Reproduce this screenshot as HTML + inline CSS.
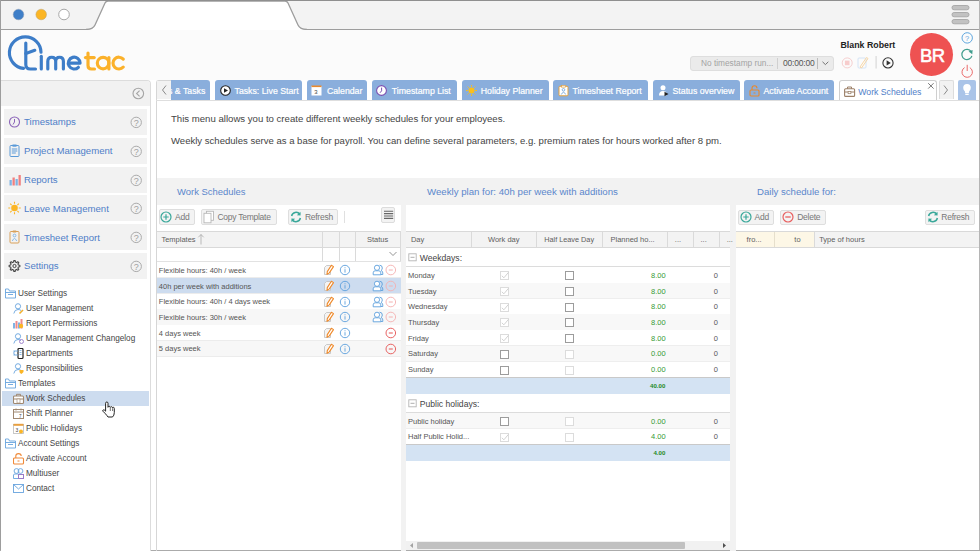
<!DOCTYPE html>
<html><head><meta charset="utf-8">
<style>
*{box-sizing:border-box;margin:0;padding:0}
html,body{width:980px;height:551px;overflow:hidden;background:#fff}
body{font-family:"Liberation Sans",sans-serif;position:relative;color:#444}
.a{position:absolute}
.t{position:absolute;white-space:nowrap;line-height:1}
</style></head><body>

<!-- ===== browser chrome ===== -->
<div class="a" style="left:0;top:0;width:980px;height:30px;background:#f3f3f3;border-bottom:1px solid #9d9d9d"></div>
<svg class="a" style="left:0;top:0" width="980" height="31">
  <path d="M88 31 L88 29.5 Q93 29.5 95 25 L105 3 Q106 1 108 1 L285 1 Q287 1 288 3 L298 25 Q300 29.5 305 29.5 L305 31 Z" fill="#fff"/>
  <path d="M86 29.5 Q93 29.5 95 25 L105 3 Q106 1 108 1 L285 1 Q287 1 288 3 L298 25 Q300 29.5 307 29.5" fill="none" stroke="#9d9d9d" stroke-width="1.3"/>
  <circle cx="18.5" cy="14.5" r="5.3" fill="#3f7fc8" stroke="#8a9bb0" stroke-width=".5"/>
  <circle cx="41.2" cy="14.5" r="5.3" fill="#fbb524" stroke="#b9a070" stroke-width=".5"/>
  <circle cx="64" cy="14.5" r="5.3" fill="#fff" stroke="#a8a8a8" stroke-width="1"/>
  <rect x="952" y="5.5" width="17" height="4.3" rx="2.1" fill="#c2c2c2" stroke="#a6a6a6" stroke-width=".9"/>
  <rect x="952" y="12.5" width="17" height="4.3" rx="2.1" fill="#c2c2c2" stroke="#a6a6a6" stroke-width=".9"/>
  <rect x="952" y="19.5" width="17" height="4.3" rx="2.1" fill="#c2c2c2" stroke="#a6a6a6" stroke-width=".9"/>
</svg>
<div class="a" style="left:0;top:0;width:980px;height:1px;background:#8f8f8f"></div>
<div class="a" style="left:0;top:0;width:1px;height:551px;background:#9d9d9d"></div>
<div class="a" style="left:979px;top:0;width:1px;height:551px;background:#b5b5b5"></div>
<div class="a" style="left:0;top:550px;width:980px;height:1px;background:#ababab"></div>

<div class="a" style="left:1px;top:30px;width:978px;height:50px;background:#fbfbfb"></div>
<!-- ===== logo ===== -->
<svg class="a" style="left:0;top:30px" width="140" height="50" viewBox="0 30 140 50">
 <g fill="none" stroke-width="3.15" stroke-linecap="round" stroke-linejoin="round">
  <g stroke="#3d7dc8">
   <path d="M23.5 68.4 A15.8 15.8 0 1 1 41 52.2"/>
   <path d="M41.3 56.3 L41.3 69"/>
   <path d="M25.8 43 L25.8 64.5 Q25.8 69 30.3 69 L35.5 69"/>
   <path d="M25.8 53.5 L34.8 50.3"/>
   <path d="M47.8 69 L47.8 61.5 Q47.8 57.2 51.7 57.2 Q55.7 57.2 55.7 61.5 L55.7 69 M55.7 61.5 Q55.7 57.2 59.6 57.2 Q63.4 57.2 63.4 61.5 L63.4 69"/>
   <path d="M68.30 63.10 H80.10 A5.9 5.9 0 1 0 78.37 67.27"/>
  </g>
  <g stroke="#fbb12a">
   <path d="M88 53 L88 65.5 Q88 69 91.5 69 L94.5 69"/>
   <path d="M85.5 57.6 L94.2 57.6"/>
   <path d="M108.9 57.5 L108.9 69"/><circle cx="103.1" cy="63.1" r="5.8"/>
   <path d="M123.28 59.15 A5.9 5.9 0 1 0 123.28 67.05"/>
  </g>
 </g>
</svg>

<!-- ===== user area ===== -->
<div class="t" style="left:840.5px;top:41.2px;font-size:8.8px;font-weight:bold;color:#222">Blank Robert</div>
<div class="a" style="left:690px;top:56px;width:144px;height:15px;background:#ebebeb;border:1px solid #dedede;border-radius:3px"></div>
<div class="t" style="left:701px;top:59px;font-size:8.3px;color:#a3a3a3">No timestamp run...</div>
<div class="a" style="left:777px;top:58px;width:1px;height:11px;background:#d0d0d0"></div>
<div class="t" style="left:783px;top:59.4px;font-size:8.5px;color:#555;letter-spacing:-0.2px">00:00:00</div>
<div class="a" style="left:817px;top:58px;width:1px;height:11px;background:#bdbdbd"></div>
<svg class="a" style="left:800px;top:40px" width="180" height="40">
  <path d="M22.5 21.8 L25.4 24.6 L28.3 21.8" fill="none" stroke="#666" stroke-width=".9"/>
  <circle cx="47.2" cy="22.9" r="5" fill="none" stroke="#f6cfcf" stroke-width="1"/>
  <rect x="44.9" y="20.6" width="4.6" height="4.6" fill="#f7cccc"/>
  <rect x="58" y="18" width="8" height="10" rx="1" fill="none" stroke="#cfe0f4" stroke-width=".9"/>
  <path d="M60 27 L66.5 17.5 L68 18.5 L61.5 28 Z" fill="none" stroke="#f7d39c" stroke-width=".9"/>
  <rect x="75.6" y="16" width="1" height="12.5" fill="#d2d2d2"/>
  <circle cx="88" cy="22.9" r="5.1" fill="none" stroke="#333" stroke-width="1.1"/>
  <path d="M86.6 20.3 L90.8 22.9 L86.6 25.5 Z" fill="#333"/>
</svg>
<div class="a" style="left:909.5px;top:32.5px;width:43px;height:43px;border-radius:50%;background:#ee5252"></div>
<div class="t" style="left:920px;top:47px;font-size:18.5px;color:#fff;letter-spacing:-0.7px;-webkit-text-stroke:0.55px #fff">BR</div>
<svg class="a" style="left:955px;top:28px" width="24" height="52">
  <circle cx="12.2" cy="9.9" r="5.2" fill="none" stroke="#5ea6de" stroke-width="1"/>
  <text x="12.2" y="12.7" font-size="7.5" font-family="Liberation Sans" fill="#5ea6de" text-anchor="middle">?</text>
  <path d="M16.9 27.8 A5.1 5.1 0 1 1 16.2 23.6" fill="none" stroke="#3f9d8d" stroke-width="1.2"/>
  <path d="M13.6 23.4 L17.6 21.9 L17.3 26.3 Z" fill="#3f9d8d"/>
  <path d="M9.6 39.6 A5.2 5.2 0 1 0 14.8 39.6" fill="none" stroke="#ea6a6a" stroke-width="1"/>
  <path d="M12.2 36.8 L12.2 43" fill="none" stroke="#ea6a6a" stroke-width="1"/>
</svg>

<!-- ===== sidebar ===== -->
<div class="a" style="left:1px;top:80px;width:150px;height:471px;border-top:1px solid #dcdcdc;border-right:1px solid #dcdcdc;border-top-right-radius:4px;background:#fff"></div>
<div class="a" style="left:1px;top:81px;width:149px;height:25px;background:#f1f1f1;border-top-right-radius:3px"></div>
<svg class="a" style="left:130px;top:85px" width="17" height="17"><circle cx="8.3" cy="8.5" r="5.3" fill="none" stroke="#a5a5a5" stroke-width="1.1"/><path d="M9.6 5.6 L6.6 8.5 L9.6 11.4" fill="none" stroke="#a5a5a5" stroke-width="1.1"/></svg>
<div class="a" style="left:4px;top:108.80px;width:143px;height:26px;background:#f2f2f2"></div>
<svg class="a" style="left:0;top:108.80px" width="150" height="26"><circle cx="14.5" cy="13" r="5" fill="none" stroke="#8a63b8" stroke-width="1.1"/><path d="M14.5 10 L14.5 13 L13 15.5" fill="none" stroke="#8a63b8" stroke-width="1"/><circle cx="136.2" cy="13.4" r="5.2" fill="none" stroke="#ababab" stroke-width="1"/><text x="136.3" y="16.6" font-size="9" font-family="Liberation Sans" fill="#a0a0a0" text-anchor="middle">?</text></svg>
<div class="t" style="left:24px;top:117.10px;font-size:9.6px;color:#4f7ec8">Timestamps</div>
<div class="a" style="left:4px;top:137.65px;width:143px;height:26px;background:#f2f2f2"></div>
<svg class="a" style="left:0;top:137.65px" width="150" height="26"><rect x="10" y="7.5" width="9" height="11" rx="1" fill="none" stroke="#5b9ad8" stroke-width="1"/><rect x="12.5" y="6.5" width="4" height="2.2" fill="#5b9ad8"/><path d="M11.8 11 h5.5 M11.8 13 h5.5 M11.8 15 h4" stroke="#5b9ad8" stroke-width="1"/><circle cx="136.2" cy="13.4" r="5.2" fill="none" stroke="#ababab" stroke-width="1"/><text x="136.3" y="16.6" font-size="9" font-family="Liberation Sans" fill="#a0a0a0" text-anchor="middle">?</text></svg>
<div class="t" style="left:24px;top:145.95px;font-size:9.6px;color:#4f7ec8">Project Management</div>
<div class="a" style="left:4px;top:166.50px;width:143px;height:26px;background:#f2f2f2"></div>
<svg class="a" style="left:0;top:166.50px" width="150" height="26"><rect x="9.5" y="13" width="2.3" height="5.5" fill="#7fb3e4"/><rect x="12.5" y="10.5" width="2.3" height="8" fill="#f08080"/><rect x="15.5" y="12" width="2.3" height="6.5" fill="#7fb3e4"/><rect x="18.5" y="8" width="2.3" height="10.5" fill="#f08080"/><circle cx="136.2" cy="13.4" r="5.2" fill="none" stroke="#ababab" stroke-width="1"/><text x="136.3" y="16.6" font-size="9" font-family="Liberation Sans" fill="#a0a0a0" text-anchor="middle">?</text></svg>
<div class="t" style="left:24px;top:174.80px;font-size:9.6px;color:#4f7ec8">Reports</div>
<div class="a" style="left:4px;top:195.35px;width:143px;height:26px;background:#f2f2f2"></div>
<svg class="a" style="left:0;top:195.35px" width="150" height="26"><circle cx="14.5" cy="13" r="3.3" fill="#fbb524"/><path d="M14.5 6.8 v2 M14.5 17.2 v2 M8.3 13 h2 M18.7 13 h2 M10.2 8.7 l1.4 1.4 M17.4 15.9 l1.4 1.4 M10.2 17.3 l1.4 -1.4 M17.4 10.1 l1.4 -1.4" stroke="#fbb524" stroke-width="1.1"/><circle cx="136.2" cy="13.4" r="5.2" fill="none" stroke="#ababab" stroke-width="1"/><text x="136.3" y="16.6" font-size="9" font-family="Liberation Sans" fill="#a0a0a0" text-anchor="middle">?</text></svg>
<div class="t" style="left:24px;top:203.65px;font-size:9.6px;color:#4f7ec8">Leave Management</div>
<div class="a" style="left:4px;top:224.20px;width:143px;height:26px;background:#f2f2f2"></div>
<svg class="a" style="left:0;top:224.20px" width="150" height="26"><rect x="10" y="7.5" width="9" height="11.5" rx="1" fill="none" stroke="#d9a15a" stroke-width="1"/><circle cx="14.5" cy="11.5" r="1.4" fill="none" stroke="#7fb3e4" stroke-width=".9"/><path d="M12.3 17 Q14.5 12 16.7 17" fill="none" stroke="#7fb3e4" stroke-width=".9"/><rect x="12.8" y="6.5" width="3.4" height="2" fill="#d9a15a"/><circle cx="136.2" cy="13.4" r="5.2" fill="none" stroke="#ababab" stroke-width="1"/><text x="136.3" y="16.6" font-size="9" font-family="Liberation Sans" fill="#a0a0a0" text-anchor="middle">?</text></svg>
<div class="t" style="left:24px;top:232.50px;font-size:9.6px;color:#4f7ec8">Timesheet Report</div>
<div class="a" style="left:4px;top:253.05px;width:143px;height:26px;background:#f2f2f2"></div>
<svg class="a" style="left:0;top:253.05px" width="150" height="26"><path d="M18.39 12.07 L19.85 12.28 L19.85 13.72 L18.39 13.93 L17.91 15.09 L18.79 16.28 L17.78 17.29 L16.59 16.41 L15.43 16.89 L15.22 18.35 L13.78 18.35 L13.57 16.89 L12.41 16.41 L11.22 17.29 L10.21 16.28 L11.09 15.09 L10.61 13.93 L9.15 13.72 L9.15 12.28 L10.61 12.07 L11.09 10.91 L10.21 9.72 L11.22 8.71 L12.41 9.59 L13.57 9.11 L13.78 7.65 L15.22 7.65 L15.43 9.11 L16.59 9.59 L17.78 8.71 L18.79 9.72 L17.91 10.91 Z" fill="none" stroke="#444" stroke-width="1.1" stroke-linejoin="round"/><circle cx="14.5" cy="13" r="1.6" fill="none" stroke="#444" stroke-width="1"/><circle cx="136.2" cy="13.4" r="5.2" fill="none" stroke="#ababab" stroke-width="1"/><text x="136.3" y="16.6" font-size="9" font-family="Liberation Sans" fill="#a0a0a0" text-anchor="middle">?</text></svg>
<div class="t" style="left:24px;top:261.35px;font-size:9.6px;color:#4f7ec8">Settings</div>
<div class="a" style="left:2px;top:391px;width:147px;height:15px;background:#cddcef"></div>
<svg class="a" style="left:5px;top:287.5px" width="12" height="12"><path d="M0.5 2 L0.5 10 L10.5 10 L10.5 3 L4.5 3 L3.5 1 L0.5 1 Z" fill="none" stroke="#68a4de" stroke-width=".9"/><path d="M0.5 4.5 H10.5 M3 6.5 H8" stroke="#68a4de" stroke-width=".9"/></svg>
<div class="t" style="left:18px;top:290.4px;font-size:8.2px;color:#454545">User Settings</div>
<svg class="a" style="left:12.5px;top:302.5px" width="12" height="12"><circle cx="5" cy="3.3" r="2.6" fill="none" stroke="#68a4de" stroke-width=".9"/><path d="M0.8 10.5 Q1.5 6.5 5 6.5 Q7 6.5 8 7.5" fill="none" stroke="#68a4de" stroke-width=".9"/><path d="M6.5 10.5 L10 7" stroke="#f0b030" stroke-width="1.6"/></svg>
<div class="t" style="left:26px;top:305.4px;font-size:8.2px;color:#454545">User Management</div>
<svg class="a" style="left:12.5px;top:317.5px" width="12" height="12"><rect x="0" y="5" width="2" height="5.5" fill="#7fb3e4"/><rect x="2.5" y="3" width="2" height="7.5" fill="#f08a8a"/><rect x="5" y="4.5" width="2" height="6" fill="#7fb3e4"/><rect x="7.5" y="1" width="2" height="9.5" fill="#f08a8a"/><circle cx="8" cy="8" r="2.2" fill="#fbb524"/></svg>
<div class="t" style="left:26px;top:320.4px;font-size:8.2px;color:#454545">Report Permissions</div>
<svg class="a" style="left:12.5px;top:332.5px" width="12" height="12"><circle cx="5" cy="3.3" r="2.6" fill="none" stroke="#68a4de" stroke-width=".9"/><path d="M0.8 10.5 Q1.5 6.5 5 6.5 Q7 6.5 8 7.5" fill="none" stroke="#68a4de" stroke-width=".9"/><circle cx="8.5" cy="8.5" r="2" fill="none" stroke="#9a7cc8" stroke-width=".9"/></svg>
<div class="t" style="left:26px;top:335.4px;font-size:8.2px;color:#454545">User Management Changelog</div>
<svg class="a" style="left:12.5px;top:347.5px" width="12" height="12"><rect x="5" y="0.5" width="5" height="10" rx="1" fill="#fff" stroke="#222" stroke-width="1.2"/><path d="M6.5 2.5 h2 M6.5 4.5 h2 M6.5 6.5 h2" stroke="#7fb3e4" stroke-width=".9"/><path d="M0.5 3 H5 M0.5 7 H5 M1.5 3 Q0 5 1.5 7" fill="none" stroke="#68a4de" stroke-width=".9"/></svg>
<div class="t" style="left:26px;top:350.4px;font-size:8.2px;color:#454545">Departments</div>
<svg class="a" style="left:12.5px;top:362.5px" width="12" height="12"><circle cx="5" cy="3.3" r="2.6" fill="none" stroke="#68a4de" stroke-width=".9"/><path d="M0.8 10.5 Q1.5 6.5 5 6.5 Q7 6.5 8 7.5" fill="none" stroke="#68a4de" stroke-width=".9"/><path d="M6.5 7 L10.5 7 L10.5 9 Q8.5 11 8.5 11 Q6.5 10 6.5 9 Z" fill="#fbb524"/></svg>
<div class="t" style="left:26px;top:365.4px;font-size:8.2px;color:#454545">Responsibilities</div>
<svg class="a" style="left:5px;top:377.5px" width="12" height="12"><path d="M0.5 2 L0.5 10 L10.5 10 L10.5 3 L4.5 3 L3.5 1 L0.5 1 Z" fill="none" stroke="#68a4de" stroke-width=".9"/><path d="M0.5 4.5 H10.5 M3 6.5 H8" stroke="#68a4de" stroke-width=".9"/></svg>
<div class="t" style="left:18px;top:380.4px;font-size:8.2px;color:#454545">Templates</div>
<svg class="a" style="left:12.5px;top:392.5px" width="12" height="12"><rect x="0.5" y="3" width="10" height="7.5" rx="1" fill="#fff" stroke="#a08870" stroke-width="1.1"/><path d="M3.5 3 V1.3 H7.5 V3 M0.5 6 H10.5" fill="none" stroke="#a08870" stroke-width="1"/><rect x="4" y="6" width="3" height="4" fill="#fff" stroke="#a08870" stroke-width=".6"/></svg>
<div class="t" style="left:26px;top:395.4px;font-size:8.2px;color:#454545">Work Schedules</div>
<svg class="a" style="left:12.5px;top:407.5px" width="12" height="12"><rect x="0.5" y="1.5" width="10" height="9" fill="#fff" stroke="#a08870" stroke-width="1"/><path d="M0.5 4 H10.5 M3 0.5 V2.5 M8 0.5 V2.5" stroke="#a08870" stroke-width="1"/><text x="6" y="9.5" font-size="4.5" font-family="Liberation Sans" fill="#444">7</text></svg>
<div class="t" style="left:26px;top:410.4px;font-size:8.2px;color:#454545">Shift Planner</div>
<svg class="a" style="left:12.5px;top:422.5px" width="12" height="12"><rect x="0.5" y="1.5" width="10" height="9" fill="#fff" stroke="#bbb" stroke-width=".8"/><rect x="0.5" y="0.8" width="10" height="2" fill="#e8a040"/><text x="2.5" y="9" font-size="5" font-family="Liberation Sans" fill="#444">3</text><circle cx="8" cy="8.5" r="2" fill="#fbb524"/></svg>
<div class="t" style="left:26px;top:425.4px;font-size:8.2px;color:#454545">Public Holidays</div>
<svg class="a" style="left:5px;top:437.5px" width="12" height="12"><path d="M0.5 2 L0.5 10 L10.5 10 L10.5 3 L4.5 3 L3.5 1 L0.5 1 Z" fill="none" stroke="#68a4de" stroke-width=".9"/><path d="M0.5 4.5 H10.5 M3 6.5 H8" stroke="#68a4de" stroke-width=".9"/></svg>
<div class="t" style="left:18px;top:440.4px;font-size:8.2px;color:#454545">Account Settings</div>
<svg class="a" style="left:12.5px;top:452.5px" width="12" height="12"><rect x="0.5" y="5" width="10" height="6" rx="1" fill="none" stroke="#f08a3a" stroke-width="1.1"/><path d="M2.8 5 V3 Q2.8 0.6 5.5 0.6 Q8.2 0.6 8.2 3" fill="none" stroke="#f08a3a" stroke-width="1.1"/><path d="M4.5 8 h2" stroke="#f08a3a" stroke-width="1"/></svg>
<div class="t" style="left:26px;top:455.4px;font-size:8.2px;color:#454545">Activate Account</div>
<svg class="a" style="left:12.5px;top:467.5px" width="12" height="12"><circle cx="3.5" cy="3" r="2.4" fill="none" stroke="#68a4de" stroke-width=".9"/><circle cx="7.5" cy="3" r="2.4" fill="none" stroke="#68a4de" stroke-width=".9"/><path d="M0.5 10.5 V7 Q0.5 6 2 6 H5.5 V10.5 Z" fill="none" stroke="#68a4de" stroke-width=".9"/><rect x="5.5" y="6.5" width="5" height="4" fill="none" stroke="#9a7cc8" stroke-width="1"/></svg>
<div class="t" style="left:26px;top:470.4px;font-size:8.2px;color:#454545">Multiuser</div>
<svg class="a" style="left:12.5px;top:482.5px" width="12" height="12"><rect x="0.5" y="1.5" width="10" height="8" fill="none" stroke="#68a4de" stroke-width=".9"/><path d="M0.5 1.5 L5.5 6 L10.5 1.5" fill="none" stroke="#68a4de" stroke-width=".9"/></svg>
<div class="t" style="left:26px;top:485.4px;font-size:8.2px;color:#454545">Contact</div>
<svg class="a" style="left:101px;top:401px" width="15" height="18"><path d="M4.6 10.2 L4.6 2.3 Q4.6 1 5.8 1 Q7 1 7 2.3 L7 6.3 Q7.2 5.3 8.2 5.3 Q9.2 5.3 9.3 6.4 Q9.6 5.7 10.4 5.7 Q11.4 5.7 11.6 6.8 Q11.9 6.3 12.5 6.3 Q13.3 6.3 13.3 7.6 L13.3 11.5 Q13.3 14.5 11.5 16 L7 16 Q6 14.5 4 12.3 L2 10.3 Q1.3 9.4 2.2 8.9 Q3.2 8.5 4.6 10.2 Z" fill="#fff" stroke="#222" stroke-width="1"/><path d="M9.3 6.8 V10 M11.6 7.2 V10" stroke="#333" stroke-width=".7"/></svg>

<!-- ===== content ===== -->
<div class="a" style="left:156px;top:80px;width:16px;height:471px;border-left:1px solid #d6d6d6;border-top:1px solid #d6d6d6;border-top-left-radius:3px"></div>
<div class="a" style="left:156px;top:99.5px;width:823px;height:1px;background:#dedede"></div>
<div class="a" style="left:157px;top:81px;width:14px;height:18px;background:#f2f2f2"></div>
<svg class="a" style="left:157px;top:81px" width="14" height="18"><path d="M9 4.5 L5.5 9 L9 13.5" fill="none" stroke="#8a8a8a" stroke-width="1"/></svg>
<div class="a" style="left:171px;top:80px;width:39.4px;height:19.5px;background:#8aaedc;border-radius:0 3px 0 0;overflow:hidden"><div class="t" style="left:-3px;top:7.2px;font-size:8.75px;color:#fff;-webkit-text-stroke:0.2px #fff">s &amp; Tasks</div></div>

<div class="a" style="left:215px;top:80px;width:87.4px;height:19.5px;background:#8aaedc;border-radius:3px 3px 0 0"></div>
<svg class="a" style="left:219.5px;top:85.4px" width="11" height="12"><circle cx="5.5" cy="5.5" r="4.8" fill="#fff" stroke="#222" stroke-width="1.1"/><path d="M4 3.2 L8 5.5 L4 7.8 Z" fill="#222"/></svg>
<div class="t" style="left:234.5px;top:87.2px;font-size:8.75px;color:#fff;-webkit-text-stroke:0.2px #fff">Tasks: Live Start</div>
<div class="a" style="left:306.8px;top:80px;width:60.2px;height:19.5px;background:#8aaedc;border-radius:3px 3px 0 0"></div>
<svg class="a" style="left:311.3px;top:85.4px" width="11" height="12"><rect x="0.5" y="1" width="10" height="9.5" fill="#fff"/><rect x="0.5" y="0.5" width="10" height="1.6" fill="#e8892e"/><text x="3.3" y="9.2" font-size="6" font-family="Liberation Sans" fill="#444">3</text></svg>
<div class="t" style="left:326.9px;top:87.2px;font-size:8.75px;color:#fff;-webkit-text-stroke:0.2px #fff">Calendar</div>
<div class="a" style="left:371.6px;top:80px;width:85.4px;height:19.5px;background:#8aaedc;border-radius:3px 3px 0 0"></div>
<svg class="a" style="left:376.1px;top:85.4px" width="11" height="12"><circle cx="5.5" cy="5.5" r="4.9" fill="#fff" stroke="#7a4fb0" stroke-width="1.1"/><path d="M5.6 2.6 L5.6 5.8 L4 7.8" fill="none" stroke="#7a4fb0" stroke-width="1"/></svg>
<div class="t" style="left:391.8px;top:87.2px;font-size:8.75px;color:#fff;-webkit-text-stroke:0.2px #fff">Timestamp List</div>
<div class="a" style="left:461.5px;top:80px;width:87.2px;height:19.5px;background:#8aaedc;border-radius:3px 3px 0 0"></div>
<svg class="a" style="left:466.0px;top:85.4px" width="11" height="12"><circle cx="5.5" cy="5.5" r="3" fill="#fbbf1a"/><path d="M5.5 0 v1.6 M5.5 9.4 v1.6 M0 5.5 h1.6 M9.4 5.5 h1.6 M1.6 1.6 l1.1 1.1 M8.3 8.3 l1.1 1.1 M1.6 9.4 l1.1 -1.1 M8.3 2.7 l1.1 -1.1" stroke="#fbbf1a" stroke-width="1"/></svg>
<div class="t" style="left:480.8px;top:87.2px;font-size:8.75px;color:#fff;-webkit-text-stroke:0.2px #fff">Holiday Planner</div>
<div class="a" style="left:553.3px;top:80px;width:94.7px;height:19.5px;background:#8aaedc;border-radius:3px 3px 0 0"></div>
<svg class="a" style="left:557.8px;top:85.4px" width="11" height="12"><rect x="1" y="1.3" width="9" height="9.5" rx="1" fill="#fff" stroke="#e0a040" stroke-width="1"/><rect x="3.5" y="0.3" width="4" height="1.8" fill="#fff" stroke="#e0a040" stroke-width=".7"/><circle cx="5.5" cy="4.8" r="1.3" fill="none" stroke="#6aa0d8" stroke-width=".8"/><path d="M3.3 9.5 Q5.5 5 7.7 9.5" fill="none" stroke="#6aa0d8" stroke-width=".8"/></svg>
<div class="t" style="left:572.5px;top:87.2px;font-size:8.75px;color:#fff;-webkit-text-stroke:0.2px #fff">Timesheet Report</div>
<div class="a" style="left:653.2px;top:80px;width:86.4px;height:19.5px;background:#8aaedc;border-radius:3px 3px 0 0"></div>
<svg class="a" style="left:657.7px;top:85.4px" width="11" height="12"><circle cx="5" cy="2.8" r="2.5" fill="#fff"/><path d="M1 10.5 Q1 6 5 6 Q8 6 8.5 8 L8.5 10.5 Z" fill="#fff"/><path d="M6.5 6.8 L10.5 9 L6.5 11.2 Z" fill="#222"/></svg>
<div class="t" style="left:672.5px;top:87.2px;font-size:8.75px;color:#fff;-webkit-text-stroke:0.2px #fff">Status overview</div>
<div class="a" style="left:744px;top:80px;width:89.6px;height:19.5px;background:#8aaedc;border-radius:3px 3px 0 0"></div>
<svg class="a" style="left:748.5px;top:85.4px" width="11" height="12"><rect x="1" y="5" width="9" height="6" rx="1" fill="none" stroke="#e8892e" stroke-width="1.1"/><path d="M3 5 V3.2 Q3 0.8 5.5 0.8 Q8 0.8 8 3.2" fill="none" stroke="#e8892e" stroke-width="1.1"/><path d="M4.5 8 h2" stroke="#e8892e" stroke-width="1"/></svg>
<div class="t" style="left:763.5px;top:87.2px;font-size:8.75px;color:#fff;-webkit-text-stroke:0.2px #fff">Activate Account</div>
<div class="a" style="left:838.8px;top:80.4px;width:98px;height:20px;background:#fff;border:1px solid #cfcfcf;border-bottom:none;border-radius:3px 3px 0 0"></div>
<svg class="a" style="left:843.5px;top:86px" width="12" height="12"><rect x="0.6" y="2.8" width="10" height="7.6" rx="1" fill="#fff" stroke="#9c8068" stroke-width="1.1"/><path d="M3.5 2.8 V1 H7.5 V2.8 M0.6 6 H10.6" fill="none" stroke="#9c8068" stroke-width="1"/><rect x="4.1" y="5.5" width="2.8" height="2.2" fill="#fff" stroke="#9c8068" stroke-width=".7"/></svg>
<div class="t" style="left:858.3px;top:87.8px;font-size:8.7px;color:#4f7ec8">Work Schedules</div>
<svg class="a" style="left:926px;top:81px" width="10" height="10"><path d="M2.2 2.2 L7.6 7.6 M7.6 2.2 L2.2 7.6" stroke="#555" stroke-width=".8"/></svg>
<div class="a" style="left:938.5px;top:80.4px;width:15px;height:19px;background:#f2f2f2;border:1px solid #dcdcdc;border-bottom:none;border-radius:2px 2px 0 0"></div>
<svg class="a" style="left:939px;top:81px" width="14" height="18"><path d="M5 4.5 L8.5 9 L5 13.5" fill="none" stroke="#8a8a8a" stroke-width="1"/></svg>
<div class="a" style="left:958.3px;top:80.3px;width:18px;height:19.5px;background:#aac4e8;border-radius:2px 2px 0 0"></div>
<svg class="a" style="left:958px;top:81px" width="18" height="18"><path d="M9 3 Q5.2 3 5.2 6.8 Q5.2 8.8 6.8 10.3 L7.2 12 L10.8 12 L11.2 10.3 Q12.8 8.8 12.8 6.8 Q12.8 3 9 3 Z" fill="#fff"/><rect x="7.3" y="12.6" width="3.4" height="1.4" fill="#fff"/></svg>
<div class="t" style="left:171px;top:114px;font-size:9.6px;color:#444">This menu allows you to create different weekly schedules for your employees.</div>
<div class="t" style="left:171px;top:136px;font-size:9.55px;color:#444">Weekly schedules serve as a base for payroll. You can define several parameters, e.g. premium rates for hours worked after 8 pm.</div>
<div class="a" style="left:157px;top:178px;width:822px;height:26.5px;background:#f2f2f2"></div>
<div class="t" style="left:177px;top:186.8px;font-size:9.45px;color:#5b87cc">Work Schedules</div>
<div class="t" style="left:427px;top:186.8px;font-size:9.66px;color:#5b87cc">Weekly plan for: 40h per week with additions</div>
<div class="t" style="left:757px;top:186.8px;font-size:9.6px;color:#5b87cc">Daily schedule for:</div>
<div class="a" style="left:400.5px;top:204px;width:5px;height:347px;background:#f2f2f2"></div>
<div class="a" style="left:730.4px;top:204px;width:5.3px;height:347px;background:#f2f2f2"></div>
<div class="a" style="left:158.5px;top:209.4px;width:36.8px;height:15.2px;background:#f3f3f3;border:1px solid #dedede;border-radius:2px"></div>
<svg class="a" style="left:160.2px;top:211px" width="12" height="12"><circle cx="6" cy="6" r="5" fill="none" stroke="#3aa89a" stroke-width="1.2"/><path d="M6 3.3 V8.7 M3.3 6 H8.7" stroke="#3aa89a" stroke-width="1.2"/></svg>
<div class="t" style="left:175px;top:212.8px;font-size:8.5px;color:#777;letter-spacing:-0.25px">Add</div>
<div class="a" style="left:201.1px;top:209.4px;width:76.4px;height:15.2px;background:#f3f3f3;border:1px solid #dedede;border-radius:2px"></div>
<svg class="a" style="left:203px;top:210px" width="12" height="14"><rect x="3.5" y="1.3" width="7" height="9" fill="#fff" stroke="#b8b8b8" stroke-width=".9"/><rect x="1" y="3.3" width="7" height="9.5" fill="#fff" stroke="#b8b8b8" stroke-width=".9"/></svg>
<div class="t" style="left:217.4px;top:212.8px;font-size:8.5px;color:#777;letter-spacing:-0.25px">Copy Template</div>
<div class="a" style="left:288.4px;top:209.4px;width:49.8px;height:15.2px;background:#f3f3f3;border:1px solid #dedede;border-radius:2px"></div>
<svg class="a" style="left:289.1px;top:210px" width="14" height="14"><path d="M2.6 6 A4.6 4.6 0 0 1 10.8 4.2" fill="none" stroke="#3aa89a" stroke-width="1.5"/><path d="M11.5 1.8 L11.6 5.6 L7.9 5.3 Z" fill="#3aa89a"/><path d="M11.4 8 A4.6 4.6 0 0 1 3.2 9.8" fill="none" stroke="#3aa89a" stroke-width="1.5"/><path d="M2.5 12.2 L2.4 8.4 L6.1 8.7 Z" fill="#3aa89a"/></svg>
<div class="t" style="left:304.9px;top:212.8px;font-size:8.5px;color:#777;letter-spacing:-0.25px">Refresh</div>
<div class="a" style="left:344px;top:211px;width:1px;height:12px;background:#e0e0e0"></div>
<div class="a" style="left:381px;top:207.2px;width:14.4px;height:15.4px;background:#f3f3f3;border:1px solid #dcdcdc;border-radius:2px"></div>
<svg class="a" style="left:381px;top:207px" width="15" height="16"><path d="M3 4.2 H12.2 M3 6.6 H12.2 M3 9 H12.2 M3 11.4 H12.2" stroke="#666" stroke-width="1.1"/></svg>
<div class="a" style="left:157px;top:231px;width:244px;height:1px;background:#d9d9d9"></div>
<div class="a" style="left:157px;top:232px;width:244px;height:15px;background:#f3f3f3"></div>
<div class="a" style="left:157px;top:247px;width:244px;height:1px;background:#d9d9d9"></div>
<div class="a" style="left:157px;top:260.6px;width:244px;height:1px;background:#e2e2e2"></div>
<div class="a" style="left:321.9px;top:231px;width:1px;height:30px;background:#dadada"></div>
<div class="a" style="left:338.5px;top:231px;width:1px;height:30px;background:#dadada"></div>
<div class="a" style="left:354.6px;top:231px;width:1px;height:30px;background:#dadada"></div>
<div class="a" style="left:400px;top:231px;width:1px;height:30px;background:#dadada"></div>
<div class="t" style="left:161.4px;top:236px;font-size:7.5px;color:#5e5e5e">Templates</div>
<svg class="a" style="left:197px;top:232px" width="8" height="14"><path d="M4 2.5 V12.5 M1.3 5.3 L4 2.5 L6.7 5.3" fill="none" stroke="#a0a0a0" stroke-width=".7"/></svg>
<div class="t" style="left:366.9px;top:236px;font-size:7.5px;color:#5e5e5e">Status</div>
<svg class="a" style="left:388px;top:250px" width="10" height="8"><path d="M1.5 2 L5 5.5 L8.5 2" fill="none" stroke="#888" stroke-width=".9"/></svg>
<!--LEFTROWS-->
<div class="a" style="left:157px;top:262.40px;width:243.5px;height:15.68px;background:#fff"></div>
<div class="a" style="left:157px;top:277.48px;width:243.5px;height:.8px;background:#ececec"></div>
<div class="t" style="left:158.8px;top:266.84px;font-size:7.5px;color:#555">Flexible hours: 40h / week</div>
<svg class="a" style="left:323px;top:264.24px" width="12" height="12"><path d="M1.5 3.5 L3.5 1.5 H7.5 V10.5 H1.5 Z" fill="#f4f4f4" stroke="#c4c4c4" stroke-width=".9"/><path d="M4 10.3 L4.3 7.6 L8.4 1.3 L10.5 2.6 L6.3 8.9 Z" fill="#fff" stroke="#f08a2a" stroke-width="1.1" stroke-linejoin="round"/></svg>
<svg class="a" style="left:339px;top:264.24px" width="12" height="12"><circle cx="6" cy="6" r="4.7" fill="none" stroke="#5c9fdc" stroke-width=".9"/><path d="M6 5.2 V8.6" stroke="#5c9fdc" stroke-width=".9"/><circle cx="6" cy="3.7" r=".55" fill="#5c9fdc"/></svg>
<svg class="a" style="left:372px;top:264.24px" width="12" height="12"><path d="M7.5 1.2 Q10.3 1.2 10.3 4 Q10.3 6 9 6.5 Q10.8 7 10.8 9 V10.5 H8.5" fill="none" stroke="#5c9fdc" stroke-width=".9"/><circle cx="5" cy="3.8" r="2.6" fill="#fff" stroke="#5c9fdc" stroke-width=".9"/><path d="M1.2 10.8 V8.8 Q1.2 6.8 3.2 6.8 H6.8 Q8.8 6.8 8.8 8.8 V10.8 Z" fill="#fff" stroke="#5c9fdc" stroke-width=".9"/></svg>
<svg class="a" style="left:385px;top:264.24px" width="12" height="12"><circle cx="5.8" cy="6" r="4.8" fill="none" stroke="#f4b0b0" stroke-width=".9"/><path d="M3.8 6 H7.8" stroke="#f4b0b0" stroke-width="1"/></svg>
<div class="a" style="left:157px;top:278.08px;width:243.5px;height:15.68px;background:#cddcef"></div>
<div class="a" style="left:157px;top:293.16px;width:243.5px;height:.8px;background:#ececec"></div>
<div class="t" style="left:158.8px;top:282.52px;font-size:7.5px;color:#555">40h per week with additions</div>
<svg class="a" style="left:323px;top:279.92px" width="12" height="12"><path d="M1.5 3.5 L3.5 1.5 H7.5 V10.5 H1.5 Z" fill="#f4f4f4" stroke="#c4c4c4" stroke-width=".9"/><path d="M4 10.3 L4.3 7.6 L8.4 1.3 L10.5 2.6 L6.3 8.9 Z" fill="#fff" stroke="#f08a2a" stroke-width="1.1" stroke-linejoin="round"/></svg>
<svg class="a" style="left:339px;top:279.92px" width="12" height="12"><circle cx="6" cy="6" r="4.7" fill="none" stroke="#5c9fdc" stroke-width=".9"/><path d="M6 5.2 V8.6" stroke="#5c9fdc" stroke-width=".9"/><circle cx="6" cy="3.7" r=".55" fill="#5c9fdc"/></svg>
<svg class="a" style="left:372px;top:279.92px" width="12" height="12"><path d="M7.5 1.2 Q10.3 1.2 10.3 4 Q10.3 6 9 6.5 Q10.8 7 10.8 9 V10.5 H8.5" fill="none" stroke="#5c9fdc" stroke-width=".9"/><circle cx="5" cy="3.8" r="2.6" fill="#fff" stroke="#5c9fdc" stroke-width=".9"/><path d="M1.2 10.8 V8.8 Q1.2 6.8 3.2 6.8 H6.8 Q8.8 6.8 8.8 8.8 V10.8 Z" fill="#fff" stroke="#5c9fdc" stroke-width=".9"/></svg>
<svg class="a" style="left:385px;top:279.92px" width="12" height="12"><circle cx="5.8" cy="6" r="4.8" fill="none" stroke="#f4b0b0" stroke-width=".9"/><path d="M3.8 6 H7.8" stroke="#f4b0b0" stroke-width="1"/></svg>
<div class="a" style="left:157px;top:293.76px;width:243.5px;height:15.68px;background:#fff"></div>
<div class="a" style="left:157px;top:308.84px;width:243.5px;height:.8px;background:#ececec"></div>
<div class="t" style="left:158.8px;top:298.20px;font-size:7.5px;color:#555">Flexible hours: 40h / 4 days week</div>
<svg class="a" style="left:323px;top:295.60px" width="12" height="12"><path d="M1.5 3.5 L3.5 1.5 H7.5 V10.5 H1.5 Z" fill="#f4f4f4" stroke="#c4c4c4" stroke-width=".9"/><path d="M4 10.3 L4.3 7.6 L8.4 1.3 L10.5 2.6 L6.3 8.9 Z" fill="#fff" stroke="#f08a2a" stroke-width="1.1" stroke-linejoin="round"/></svg>
<svg class="a" style="left:339px;top:295.60px" width="12" height="12"><circle cx="6" cy="6" r="4.7" fill="none" stroke="#5c9fdc" stroke-width=".9"/><path d="M6 5.2 V8.6" stroke="#5c9fdc" stroke-width=".9"/><circle cx="6" cy="3.7" r=".55" fill="#5c9fdc"/></svg>
<svg class="a" style="left:372px;top:295.60px" width="12" height="12"><path d="M7.5 1.2 Q10.3 1.2 10.3 4 Q10.3 6 9 6.5 Q10.8 7 10.8 9 V10.5 H8.5" fill="none" stroke="#5c9fdc" stroke-width=".9"/><circle cx="5" cy="3.8" r="2.6" fill="#fff" stroke="#5c9fdc" stroke-width=".9"/><path d="M1.2 10.8 V8.8 Q1.2 6.8 3.2 6.8 H6.8 Q8.8 6.8 8.8 8.8 V10.8 Z" fill="#fff" stroke="#5c9fdc" stroke-width=".9"/></svg>
<svg class="a" style="left:385px;top:295.60px" width="12" height="12"><circle cx="5.8" cy="6" r="4.8" fill="none" stroke="#f4b0b0" stroke-width=".9"/><path d="M3.8 6 H7.8" stroke="#f4b0b0" stroke-width="1"/></svg>
<div class="a" style="left:157px;top:309.44px;width:243.5px;height:15.68px;background:#f7f7f7"></div>
<div class="a" style="left:157px;top:324.52px;width:243.5px;height:.8px;background:#ececec"></div>
<div class="t" style="left:158.8px;top:313.88px;font-size:7.5px;color:#555">Flexible hours: 30h / week</div>
<svg class="a" style="left:323px;top:311.28px" width="12" height="12"><path d="M1.5 3.5 L3.5 1.5 H7.5 V10.5 H1.5 Z" fill="#f4f4f4" stroke="#c4c4c4" stroke-width=".9"/><path d="M4 10.3 L4.3 7.6 L8.4 1.3 L10.5 2.6 L6.3 8.9 Z" fill="#fff" stroke="#f08a2a" stroke-width="1.1" stroke-linejoin="round"/></svg>
<svg class="a" style="left:339px;top:311.28px" width="12" height="12"><circle cx="6" cy="6" r="4.7" fill="none" stroke="#5c9fdc" stroke-width=".9"/><path d="M6 5.2 V8.6" stroke="#5c9fdc" stroke-width=".9"/><circle cx="6" cy="3.7" r=".55" fill="#5c9fdc"/></svg>
<svg class="a" style="left:372px;top:311.28px" width="12" height="12"><path d="M7.5 1.2 Q10.3 1.2 10.3 4 Q10.3 6 9 6.5 Q10.8 7 10.8 9 V10.5 H8.5" fill="none" stroke="#5c9fdc" stroke-width=".9"/><circle cx="5" cy="3.8" r="2.6" fill="#fff" stroke="#5c9fdc" stroke-width=".9"/><path d="M1.2 10.8 V8.8 Q1.2 6.8 3.2 6.8 H6.8 Q8.8 6.8 8.8 8.8 V10.8 Z" fill="#fff" stroke="#5c9fdc" stroke-width=".9"/></svg>
<svg class="a" style="left:385px;top:311.28px" width="12" height="12"><circle cx="5.8" cy="6" r="4.8" fill="none" stroke="#f4b0b0" stroke-width=".9"/><path d="M3.8 6 H7.8" stroke="#f4b0b0" stroke-width="1"/></svg>
<div class="a" style="left:157px;top:325.12px;width:243.5px;height:15.68px;background:#fff"></div>
<div class="a" style="left:157px;top:340.20px;width:243.5px;height:.8px;background:#ececec"></div>
<div class="t" style="left:158.8px;top:329.56px;font-size:7.5px;color:#555">4 days week</div>
<svg class="a" style="left:323px;top:326.96px" width="12" height="12"><path d="M1.5 3.5 L3.5 1.5 H7.5 V10.5 H1.5 Z" fill="#f4f4f4" stroke="#c4c4c4" stroke-width=".9"/><path d="M4 10.3 L4.3 7.6 L8.4 1.3 L10.5 2.6 L6.3 8.9 Z" fill="#fff" stroke="#f08a2a" stroke-width="1.1" stroke-linejoin="round"/></svg>
<svg class="a" style="left:339px;top:326.96px" width="12" height="12"><circle cx="6" cy="6" r="4.7" fill="none" stroke="#5c9fdc" stroke-width=".9"/><path d="M6 5.2 V8.6" stroke="#5c9fdc" stroke-width=".9"/><circle cx="6" cy="3.7" r=".55" fill="#5c9fdc"/></svg>
<svg class="a" style="left:385px;top:326.96px" width="12" height="12"><circle cx="5.8" cy="6" r="4.8" fill="none" stroke="#e86464" stroke-width="1"/><path d="M3.8 6 H7.8" stroke="#e86464" stroke-width="1.1"/></svg>
<div class="a" style="left:157px;top:340.80px;width:243.5px;height:15.68px;background:#f7f7f7"></div>
<div class="a" style="left:157px;top:355.88px;width:243.5px;height:.8px;background:#ececec"></div>
<div class="t" style="left:158.8px;top:345.24px;font-size:7.5px;color:#555">5 days week</div>
<svg class="a" style="left:323px;top:342.64px" width="12" height="12"><path d="M1.5 3.5 L3.5 1.5 H7.5 V10.5 H1.5 Z" fill="#f4f4f4" stroke="#c4c4c4" stroke-width=".9"/><path d="M4 10.3 L4.3 7.6 L8.4 1.3 L10.5 2.6 L6.3 8.9 Z" fill="#fff" stroke="#f08a2a" stroke-width="1.1" stroke-linejoin="round"/></svg>
<svg class="a" style="left:339px;top:342.64px" width="12" height="12"><circle cx="6" cy="6" r="4.7" fill="none" stroke="#5c9fdc" stroke-width=".9"/><path d="M6 5.2 V8.6" stroke="#5c9fdc" stroke-width=".9"/><circle cx="6" cy="3.7" r=".55" fill="#5c9fdc"/></svg>
<svg class="a" style="left:385px;top:342.64px" width="12" height="12"><circle cx="5.8" cy="6" r="4.8" fill="none" stroke="#e86464" stroke-width="1"/><path d="M3.8 6 H7.8" stroke="#e86464" stroke-width="1.1"/></svg>
<!--/LEFTROWS-->
<div class="a" style="left:405.5px;top:231px;width:324.9px;height:1px;background:#d9d9d9"></div>
<div class="a" style="left:405.5px;top:232px;width:324.9px;height:15px;background:#f3f3f3"></div>
<div class="a" style="left:405.5px;top:247px;width:324.9px;height:1px;background:#d9d9d9"></div>
<div class="a" style="left:470.9px;top:232px;width:1px;height:15px;background:#dadada"></div>
<div class="a" style="left:536.3px;top:232px;width:1px;height:15px;background:#dadada"></div>
<div class="a" style="left:601.5px;top:232px;width:1px;height:15px;background:#dadada"></div>
<div class="a" style="left:667.4px;top:232px;width:1px;height:15px;background:#dadada"></div>
<div class="a" style="left:693.2px;top:232px;width:1px;height:15px;background:#dadada"></div>
<div class="a" style="left:719.3px;top:232px;width:1px;height:15px;background:#dadada"></div>
<div class="t" style="left:410.9px;top:236.20px;font-size:7.5px;color:#5e5e5e;">Day</div>
<div class="t" style="left:488px;top:236.20px;font-size:7.5px;color:#5e5e5e;">Work day</div>
<div class="t" style="left:544.2px;top:236.20px;font-size:7.3px;color:#5e5e5e;">Half Leave Day</div>
<div class="t" style="left:610.5px;top:236.20px;font-size:7.5px;color:#5e5e5e;">Planned ho...</div>
<div class="t" style="left:674.8px;top:236.20px;font-size:7.5px;color:#5e5e5e;">...</div>
<div class="t" style="left:700.5px;top:236.20px;font-size:7.5px;color:#5e5e5e;">...</div>
<div class="t" style="left:726.7px;top:236.20px;font-size:7.5px;color:#5e5e5e;">...</div>
<div class="a" style="left:405.5px;top:266.3px;width:324.9px;height:1px;background:#dcdcdc"></div>
<svg class="a" style="left:407.5px;top:252.90px" width="9" height="9"><rect x=".8" y=".8" width="7.4" height="7" fill="none" stroke="#b5b5b5" stroke-width=".9"/><path d="M2.5 4.3 H6.5" stroke="#a5a5a5" stroke-width=".9"/></svg>
<div class="t" style="left:419.7px;top:253.50px;font-size:8.6px;color:#444;">Weekdays:</div>
<div class="a" style="left:405.5px;top:267.3px;width:324.9px;height:15.72px;background:#fff"></div>
<div class="a" style="left:405.5px;top:282.52px;width:324.9px;height:0.8px;background:#eeeeee"></div>
<div class="t" style="left:408px;top:271.86px;font-size:7.5px;color:#555;">Monday</div>
<svg class="a" style="left:499px;top:270px" width="12" height="12"><rect x="1.5" y="1.5" width="8" height="8" fill="#fff" stroke="#dcdcdc" stroke-width="1"/><path d="M2.8 5.8 L4.9 7.8 L9.6 2.2" fill="none" stroke="#d2d2d2" stroke-width="1"/></svg>
<svg class="a" style="left:564px;top:270px" width="12" height="12"><rect x="1.5" y="1.5" width="8" height="8" fill="#fff" stroke="#9c9c9c" stroke-width="1"/></svg>
<div class="t" style="right:314.40px;top:271.86px;font-size:7.5px;color:#359a35;text-align:right;">8.00</div>
<div class="t" style="right:262.00px;top:271.86px;font-size:7.5px;color:#555;text-align:right;">0</div>
<div class="a" style="left:405.5px;top:283.02px;width:324.9px;height:15.72px;background:#f8f8f8"></div>
<div class="a" style="left:405.5px;top:298.24px;width:324.9px;height:0.8px;background:#eeeeee"></div>
<div class="t" style="left:408px;top:287.58px;font-size:7.5px;color:#555;">Tuesday</div>
<svg class="a" style="left:499px;top:286px" width="12" height="12"><rect x="1.5" y="1.5" width="8" height="8" fill="#fff" stroke="#dcdcdc" stroke-width="1"/><path d="M2.8 5.8 L4.9 7.8 L9.6 2.2" fill="none" stroke="#d2d2d2" stroke-width="1"/></svg>
<svg class="a" style="left:564px;top:286px" width="12" height="12"><rect x="1.5" y="1.5" width="8" height="8" fill="#fff" stroke="#9c9c9c" stroke-width="1"/></svg>
<div class="t" style="right:314.40px;top:287.58px;font-size:7.5px;color:#359a35;text-align:right;">8.00</div>
<div class="t" style="right:262.00px;top:287.58px;font-size:7.5px;color:#555;text-align:right;">0</div>
<div class="a" style="left:405.5px;top:298.74px;width:324.9px;height:15.72px;background:#fff"></div>
<div class="a" style="left:405.5px;top:313.96px;width:324.9px;height:0.8px;background:#eeeeee"></div>
<div class="t" style="left:408px;top:303.30px;font-size:7.5px;color:#555;">Wednesday</div>
<svg class="a" style="left:499px;top:302px" width="12" height="12"><rect x="1.5" y="1.5" width="8" height="8" fill="#fff" stroke="#dcdcdc" stroke-width="1"/><path d="M2.8 5.8 L4.9 7.8 L9.6 2.2" fill="none" stroke="#d2d2d2" stroke-width="1"/></svg>
<svg class="a" style="left:564px;top:302px" width="12" height="12"><rect x="1.5" y="1.5" width="8" height="8" fill="#fff" stroke="#9c9c9c" stroke-width="1"/></svg>
<div class="t" style="right:314.40px;top:303.30px;font-size:7.5px;color:#359a35;text-align:right;">8.00</div>
<div class="t" style="right:262.00px;top:303.30px;font-size:7.5px;color:#555;text-align:right;">0</div>
<div class="a" style="left:405.5px;top:314.46px;width:324.9px;height:15.72px;background:#f8f8f8"></div>
<div class="a" style="left:405.5px;top:329.68px;width:324.9px;height:0.8px;background:#eeeeee"></div>
<div class="t" style="left:408px;top:319.02px;font-size:7.5px;color:#555;">Thursday</div>
<svg class="a" style="left:499px;top:317px" width="12" height="12"><rect x="1.5" y="1.5" width="8" height="8" fill="#fff" stroke="#dcdcdc" stroke-width="1"/><path d="M2.8 5.8 L4.9 7.8 L9.6 2.2" fill="none" stroke="#d2d2d2" stroke-width="1"/></svg>
<svg class="a" style="left:564px;top:317px" width="12" height="12"><rect x="1.5" y="1.5" width="8" height="8" fill="#fff" stroke="#9c9c9c" stroke-width="1"/></svg>
<div class="t" style="right:314.40px;top:319.02px;font-size:7.5px;color:#359a35;text-align:right;">8.00</div>
<div class="t" style="right:262.00px;top:319.02px;font-size:7.5px;color:#555;text-align:right;">0</div>
<div class="a" style="left:405.5px;top:330.18px;width:324.9px;height:15.72px;background:#fff"></div>
<div class="a" style="left:405.5px;top:345.4px;width:324.9px;height:0.8px;background:#eeeeee"></div>
<div class="t" style="left:408px;top:334.74px;font-size:7.5px;color:#555;">Friday</div>
<svg class="a" style="left:499px;top:333px" width="12" height="12"><rect x="1.5" y="1.5" width="8" height="8" fill="#fff" stroke="#dcdcdc" stroke-width="1"/><path d="M2.8 5.8 L4.9 7.8 L9.6 2.2" fill="none" stroke="#d2d2d2" stroke-width="1"/></svg>
<svg class="a" style="left:564px;top:333px" width="12" height="12"><rect x="1.5" y="1.5" width="8" height="8" fill="#fff" stroke="#9c9c9c" stroke-width="1"/></svg>
<div class="t" style="right:314.40px;top:334.74px;font-size:7.5px;color:#359a35;text-align:right;">8.00</div>
<div class="t" style="right:262.00px;top:334.74px;font-size:7.5px;color:#555;text-align:right;">0</div>
<div class="a" style="left:405.5px;top:345.9px;width:324.9px;height:15.72px;background:#f8f8f8"></div>
<div class="a" style="left:405.5px;top:361.12px;width:324.9px;height:0.8px;background:#eeeeee"></div>
<div class="t" style="left:408px;top:350.46px;font-size:7.5px;color:#555;">Saturday</div>
<svg class="a" style="left:499px;top:349px" width="12" height="12"><rect x="1.5" y="1.5" width="8" height="8" fill="#fff" stroke="#9c9c9c" stroke-width="1"/></svg>
<svg class="a" style="left:564px;top:349px" width="12" height="12"><rect x="1.5" y="1.5" width="8" height="8" fill="#fff" stroke="#dcdcdc" stroke-width="1"/></svg>
<div class="t" style="right:314.40px;top:350.46px;font-size:7.5px;color:#359a35;text-align:right;">0.00</div>
<div class="t" style="right:262.00px;top:350.46px;font-size:7.5px;color:#555;text-align:right;">0</div>
<div class="a" style="left:405.5px;top:361.62px;width:324.9px;height:15.72px;background:#fff"></div>
<div class="t" style="left:408px;top:366.18px;font-size:7.5px;color:#555;">Sunday</div>
<svg class="a" style="left:499px;top:365px" width="12" height="12"><rect x="1.5" y="1.5" width="8" height="8" fill="#fff" stroke="#9c9c9c" stroke-width="1"/></svg>
<svg class="a" style="left:564px;top:365px" width="12" height="12"><rect x="1.5" y="1.5" width="8" height="8" fill="#fff" stroke="#dcdcdc" stroke-width="1"/></svg>
<div class="t" style="right:314.40px;top:366.18px;font-size:7.5px;color:#359a35;text-align:right;">0.00</div>
<div class="t" style="right:262.00px;top:366.18px;font-size:7.5px;color:#555;text-align:right;">0</div>
<div class="a" style="left:405.5px;top:377.2px;width:324.9px;height:1.2px;background:#c9c9c9"></div>
<div class="a" style="left:405.5px;top:378.2px;width:324.9px;height:15.4px;background:#d4e3f3"></div>
<div class="t" style="right:314.70px;top:382.60px;font-size:6.1px;color:#228a22;text-align:right;font-weight:bold">40.00</div>
<div class="a" style="left:405.5px;top:412.4px;width:324.9px;height:1px;background:#dcdcdc"></div>
<svg class="a" style="left:407.5px;top:399.00px" width="9" height="9"><rect x=".8" y=".8" width="7.4" height="7" fill="none" stroke="#b5b5b5" stroke-width=".9"/><path d="M2.5 4.3 H6.5" stroke="#a5a5a5" stroke-width=".9"/></svg>
<div class="t" style="left:419.7px;top:399.60px;font-size:8.6px;color:#444;">Public holidays:</div>
<div class="a" style="left:405.5px;top:413.3px;width:324.9px;height:15.5px;background:#f8f8f8"></div>
<div class="a" style="left:405.5px;top:428.3px;width:324.9px;height:0.8px;background:#eeeeee"></div>
<div class="t" style="left:408px;top:417.75px;font-size:7.5px;color:#555;">Public holiday</div>
<svg class="a" style="left:499px;top:416px" width="12" height="12"><rect x="1.5" y="1.5" width="8" height="8" fill="#fff" stroke="#9c9c9c" stroke-width="1"/></svg>
<svg class="a" style="left:564px;top:416px" width="12" height="12"><rect x="1.5" y="1.5" width="8" height="8" fill="#fff" stroke="#dcdcdc" stroke-width="1"/></svg>
<div class="t" style="right:314.40px;top:417.75px;font-size:7.5px;color:#359a35;text-align:right;">0.00</div>
<div class="t" style="right:262.00px;top:417.75px;font-size:7.5px;color:#555;text-align:right;">0</div>
<div class="a" style="left:405.5px;top:428.8px;width:324.9px;height:15.5px;background:#fff"></div>
<div class="t" style="left:408px;top:433.25px;font-size:7.5px;color:#555;">Half Public Holid...</div>
<svg class="a" style="left:499px;top:432px" width="12" height="12"><rect x="1.5" y="1.5" width="8" height="8" fill="#fff" stroke="#dcdcdc" stroke-width="1"/><path d="M2.8 5.8 L4.9 7.8 L9.6 2.2" fill="none" stroke="#d2d2d2" stroke-width="1"/></svg>
<svg class="a" style="left:564px;top:432px" width="12" height="12"><rect x="1.5" y="1.5" width="8" height="8" fill="#fff" stroke="#dcdcdc" stroke-width="1"/></svg>
<div class="t" style="right:314.40px;top:433.25px;font-size:7.5px;color:#359a35;text-align:right;">4.00</div>
<div class="t" style="right:262.00px;top:433.25px;font-size:7.5px;color:#555;text-align:right;">0</div>
<div class="a" style="left:405.5px;top:444px;width:324.9px;height:1.2px;background:#c9c9c9"></div>
<div class="a" style="left:405.5px;top:445px;width:324.9px;height:15.7px;background:#d4e3f3"></div>
<div class="t" style="right:314.70px;top:449.60px;font-size:6.1px;color:#228a22;text-align:right;font-weight:bold">4.00</div>
<div class="a" style="left:405.5px;top:540.7px;width:324.9px;height:9.3px;background:#f1f1f1"></div>
<div class="a" style="left:417.3px;top:541.8px;width:268px;height:7.2px;background:#c1c1c1;border-radius:1px"></div>
<svg class="a" style="left:405px;top:540px" width="326" height="11"><path d="M8 3 L5 5.5 L8 8 Z" fill="#a3a3a3"/><path d="M318 3 L321 5.5 L318 8 Z" fill="#505050"/></svg>
<div class="a" style="left:738.3px;top:209.5px;width:36.1px;height:15.1px;background:#f3f3f3;border:1px solid #dedede;border-radius:2px"></div>
<svg class="a" style="left:739.6px;top:211px" width="12" height="12"><circle cx="6" cy="6" r="5" fill="none" stroke="#3aa89a" stroke-width="1.2"/><path d="M6 3.3 V8.7 M3.3 6 H8.7" stroke="#3aa89a" stroke-width="1.2"/></svg>
<div class="t" style="left:754.5px;top:212.8px;font-size:8.5px;color:#777;letter-spacing:-0.25px">Add</div>
<div class="a" style="left:780.4px;top:209.5px;width:46.0px;height:15.1px;background:#f3f3f3;border:1px solid #dedede;border-radius:2px"></div>
<svg class="a" style="left:782.3px;top:211px" width="12" height="12"><circle cx="6" cy="6" r="5" fill="none" stroke="#e86060" stroke-width="1.2"/><path d="M3.3 6 H8.7" stroke="#e86060" stroke-width="1.3"/></svg>
<div class="t" style="left:797.2px;top:212.8px;font-size:8.5px;color:#777;letter-spacing:-0.25px">Delete</div>
<div class="a" style="left:924.8px;top:209.5px;width:49.8px;height:15.1px;background:#f3f3f3;border:1px solid #dedede;border-radius:2px"></div>
<svg class="a" style="left:925.8px;top:210px" width="14" height="14"><path d="M2.6 6 A4.6 4.6 0 0 1 10.8 4.2" fill="none" stroke="#3aa89a" stroke-width="1.5"/><path d="M11.5 1.8 L11.6 5.6 L7.9 5.3 Z" fill="#3aa89a"/><path d="M11.4 8 A4.6 4.6 0 0 1 3.2 9.8" fill="none" stroke="#3aa89a" stroke-width="1.5"/><path d="M2.5 12.2 L2.4 8.4 L6.1 8.7 Z" fill="#3aa89a"/></svg>
<div class="t" style="left:941.3px;top:212.8px;font-size:8.5px;color:#777;letter-spacing:-0.25px">Refresh</div>
<div class="a" style="left:735.7px;top:231px;width:243.29999999999995px;height:1px;background:#d9d9d9"></div>
<div class="a" style="left:735.7px;top:232px;width:243.29999999999995px;height:15px;background:#f3f3f3"></div>
<div class="a" style="left:735.7px;top:232px;width:78.5px;height:15px;background:#fdf7e6"></div>
<div class="a" style="left:735.7px;top:247px;width:243.29999999999995px;height:1px;background:#d9d9d9"></div>
<div class="a" style="left:774.4px;top:232px;width:1px;height:15px;background:#e6dfcc"></div>
<div class="a" style="left:814.2px;top:232px;width:1px;height:15px;background:#dadada"></div>
<div class="t" style="left:746.6px;top:236.20px;font-size:7.5px;color:#5e5e5e;">fro...</div>
<div class="t" style="left:794.3px;top:236.20px;font-size:7.5px;color:#5e5e5e;">to</div>
<div class="t" style="left:819.2px;top:236.20px;font-size:7.5px;color:#5e5e5e;">Type of hours</div>

</body></html>
